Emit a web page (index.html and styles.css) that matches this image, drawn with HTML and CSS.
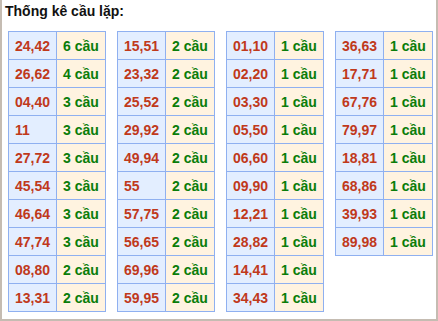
FILE: index.html
```html
<!DOCTYPE html>
<html lang="vi">
<head>
<meta charset="utf-8">
<title>Thống kê cầu lặp</title>
<link rel="stylesheet" href="styles.css">
</head>
<body>
<div class="frame">
  <div class="title">Thống kê cầu lặp:</div>
  <div class="tables">
    <table class="stat">
      <tr><td class="num">24,42</td><td class="cnt">6 cầu</td></tr>
      <tr><td class="num">26,62</td><td class="cnt">4 cầu</td></tr>
      <tr><td class="num">04,40</td><td class="cnt">3 cầu</td></tr>
      <tr><td class="num">11</td><td class="cnt">3 cầu</td></tr>
      <tr><td class="num">27,72</td><td class="cnt">3 cầu</td></tr>
      <tr><td class="num">45,54</td><td class="cnt">3 cầu</td></tr>
      <tr><td class="num">46,64</td><td class="cnt">3 cầu</td></tr>
      <tr><td class="num">47,74</td><td class="cnt">3 cầu</td></tr>
      <tr><td class="num">08,80</td><td class="cnt">2 cầu</td></tr>
      <tr><td class="num">13,31</td><td class="cnt">2 cầu</td></tr>
    </table>
    <table class="stat">
      <tr><td class="num">15,51</td><td class="cnt">2 cầu</td></tr>
      <tr><td class="num">23,32</td><td class="cnt">2 cầu</td></tr>
      <tr><td class="num">25,52</td><td class="cnt">2 cầu</td></tr>
      <tr><td class="num">29,92</td><td class="cnt">2 cầu</td></tr>
      <tr><td class="num">49,94</td><td class="cnt">2 cầu</td></tr>
      <tr><td class="num">55</td><td class="cnt">2 cầu</td></tr>
      <tr><td class="num">57,75</td><td class="cnt">2 cầu</td></tr>
      <tr><td class="num">56,65</td><td class="cnt">2 cầu</td></tr>
      <tr><td class="num">69,96</td><td class="cnt">2 cầu</td></tr>
      <tr><td class="num">59,95</td><td class="cnt">2 cầu</td></tr>
    </table>
    <table class="stat">
      <tr><td class="num">01,10</td><td class="cnt">1 cầu</td></tr>
      <tr><td class="num">02,20</td><td class="cnt">1 cầu</td></tr>
      <tr><td class="num">03,30</td><td class="cnt">1 cầu</td></tr>
      <tr><td class="num">05,50</td><td class="cnt">1 cầu</td></tr>
      <tr><td class="num">06,60</td><td class="cnt">1 cầu</td></tr>
      <tr><td class="num">09,90</td><td class="cnt">1 cầu</td></tr>
      <tr><td class="num">12,21</td><td class="cnt">1 cầu</td></tr>
      <tr><td class="num">28,82</td><td class="cnt">1 cầu</td></tr>
      <tr><td class="num">14,41</td><td class="cnt">1 cầu</td></tr>
      <tr><td class="num">34,43</td><td class="cnt">1 cầu</td></tr>
    </table>
    <table class="stat">
      <tr><td class="num">36,63</td><td class="cnt">1 cầu</td></tr>
      <tr><td class="num">17,71</td><td class="cnt">1 cầu</td></tr>
      <tr><td class="num">67,76</td><td class="cnt">1 cầu</td></tr>
      <tr><td class="num">79,97</td><td class="cnt">1 cầu</td></tr>
      <tr><td class="num">18,81</td><td class="cnt">1 cầu</td></tr>
      <tr><td class="num">68,86</td><td class="cnt">1 cầu</td></tr>
      <tr><td class="num">39,93</td><td class="cnt">1 cầu</td></tr>
      <tr><td class="num">89,98</td><td class="cnt">1 cầu</td></tr>
    </table>
  </div>
</div>
</body>
</html>
```
FILE: styles.css
```css
html, body {
  margin: 0;
  padding: 0;
  background: #ffffff;
}

.frame {
  box-sizing: border-box;
  width: 438px;
  height: 321px;
  border-left: 2px solid #c5bcb2;
  border-right: 2px solid #c5bcb2;
  border-bottom: 2px solid #c5bcb2;
  padding: 3px 0 0 6px;
  font-family: "Liberation Sans", Arial, sans-serif;
}

.title {
  font-size: 14px;
  font-weight: bold;
  line-height: 16px;
  color: #111111;
  margin-left: -3px;
}

.tables {
  display: flex;
  align-items: flex-start;
  gap: 11px;
  margin-top: 12px;
}

.stat {
  border-collapse: collapse;
  table-layout: fixed;
  width: 96px;
}

.stat td {
  border: 1px solid #8fb0f0;
  height: 27px;
  padding: 0 0 0 6px;
  text-align: left;
  font-size: 14px;
  font-weight: bold;
  line-height: 16px;
  white-space: nowrap;
}

.num {
  width: 41px;
  background: #e3eeff;
  color: #c0391b;
}

.cnt {
  width: 42px;
  background: #fff3e0;
  color: #0a7d0a;
}
```
